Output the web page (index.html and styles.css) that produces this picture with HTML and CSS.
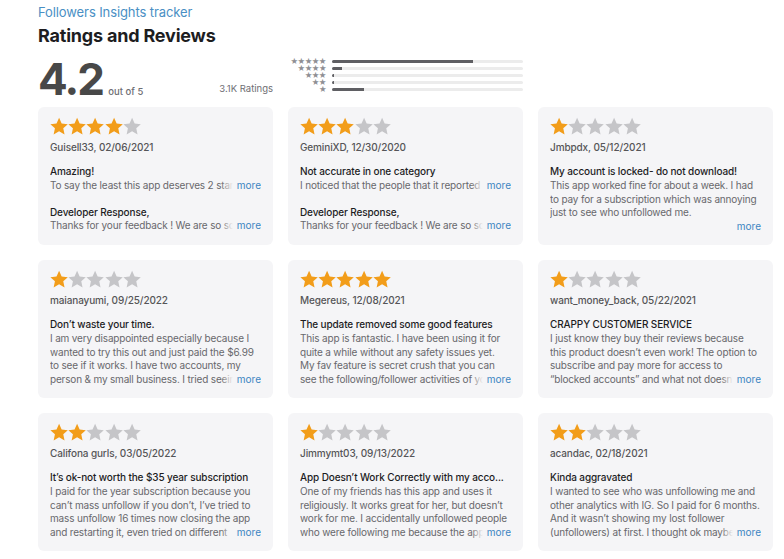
FILE: index.html
```html
<!DOCTYPE html>
<html lang="en">
<head>
<meta charset="utf-8">
<title>Ratings and Reviews</title>
<link rel="stylesheet" href="styles.css">
</head>
<body>
<svg class="defs" width="0" height="0" aria-hidden="true">
  <defs>
    <symbol id="star" viewBox="0 0 24 24">
      <path d="M12 0.6l3.4 7.4 8.1.9-6 5.5 1.7 8.1L12 18.4l-7.2 4.1 1.7-8.1-6-5.5 8.1-.9z"/>
    </symbol>
  </defs>
</svg>
<main class="page">
  <a class="app-link" href="#">Followers Insights tracker</a>
  <h1 class="title">Ratings and Reviews</h1>

  <section class="summary">
    <div class="score">
      <div class="score-main"><span class="score-num">4.2</span><span class="score-of">out of 5</span></div>
      <span class="score-count">3.1K Ratings</span>
    </div>
    <div class="hist">
      <div class="hist-row"><span class="hist-stars">★★★★★</span><span class="hist-track"><span class="hist-fill" style="width:74%"></span></span></div>
      <div class="hist-row"><span class="hist-stars">★★★★</span><span class="hist-track"><span class="hist-fill" style="width:5%"></span></span></div>
      <div class="hist-row"><span class="hist-stars">★★★</span><span class="hist-track"><span class="hist-fill" style="width:1.2%"></span></span></div>
      <div class="hist-row"><span class="hist-stars">★★</span><span class="hist-track"><span class="hist-fill" style="width:1.2%"></span></span></div>
      <div class="hist-row"><span class="hist-stars">★</span><span class="hist-track"><span class="hist-fill" style="width:17%"></span></span></div>
    </div>
  </section>

  <section class="reviews">
    <!-- Row 1 -->
    <article class="card">
      <div class="stars">
        <svg class="on"><use href="#star"/></svg><svg class="on"><use href="#star"/></svg><svg class="on"><use href="#star"/></svg><svg class="on"><use href="#star"/></svg><svg class="off"><use href="#star"/></svg>
      </div>
      <div class="meta">Guisell33, 02/06/2021</div>
      <h3 class="rtitle">Amazing!</h3>
      <div class="body l1">To say the least this app deserves 2 stars at most but I really<a class="more" href="#">more</a></div>
      <h3 class="rtitle dev">Developer Response,</h3>
      <div class="body l1">Thanks for your feedback ! We are so sorry for the trouble you faced<a class="more" href="#">more</a></div>
    </article>

    <article class="card">
      <div class="stars">
        <svg class="on"><use href="#star"/></svg><svg class="on"><use href="#star"/></svg><svg class="on"><use href="#star"/></svg><svg class="off"><use href="#star"/></svg><svg class="off"><use href="#star"/></svg>
      </div>
      <div class="meta">GeminiXD, 12/30/2020</div>
      <h3 class="rtitle">Not accurate in one category</h3>
      <div class="body l1">I noticed that the people that it reported as unfollowers were<a class="more" href="#">more</a></div>
      <h3 class="rtitle dev">Developer Response,</h3>
      <div class="body l1">Thanks for your feedback ! We are so sorry for the trouble you faced<a class="more" href="#">more</a></div>
    </article>

    <article class="card">
      <div class="stars">
        <svg class="on"><use href="#star"/></svg><svg class="off"><use href="#star"/></svg><svg class="off"><use href="#star"/></svg><svg class="off"><use href="#star"/></svg><svg class="off"><use href="#star"/></svg>
      </div>
      <div class="meta">Jmbpdx, 05/12/2021</div>
      <h3 class="rtitle">My account is locked- do not download!</h3>
      <div class="body">This app worked fine for about a week. I had to pay for a subscription which was annoying just to see who unfollowed me.</div>
      <div class="more-line"><a class="more-plain" href="#">more</a></div>
    </article>

    <!-- Row 2 -->
    <article class="card">
      <div class="stars">
        <svg class="on"><use href="#star"/></svg><svg class="off"><use href="#star"/></svg><svg class="off"><use href="#star"/></svg><svg class="off"><use href="#star"/></svg><svg class="off"><use href="#star"/></svg>
      </div>
      <div class="meta">maianayumi, 09/25/2022</div>
      <h3 class="rtitle">Don’t waste your time.</h3>
      <div class="body l4">I am very disappointed especially because I wanted to try this out and just paid the $6.99 to see if it works. I have two accounts, my person &amp; my small business. I tried seeing who unfollowed me<a class="more" href="#">more</a></div>
    </article>

    <article class="card">
      <div class="stars">
        <svg class="on"><use href="#star"/></svg><svg class="on"><use href="#star"/></svg><svg class="on"><use href="#star"/></svg><svg class="on"><use href="#star"/></svg><svg class="on"><use href="#star"/></svg>
      </div>
      <div class="meta">Megereus, 12/08/2021</div>
      <h3 class="rtitle">The update removed some good features</h3>
      <div class="body l4">This app is fantastic. I have been using it for quite a while without any safety issues yet. My fav feature is secret crush that you can see the following/follower activities of your crush and<a class="more" href="#">more</a></div>
    </article>

    <article class="card">
      <div class="stars">
        <svg class="on"><use href="#star"/></svg><svg class="off"><use href="#star"/></svg><svg class="off"><use href="#star"/></svg><svg class="off"><use href="#star"/></svg><svg class="off"><use href="#star"/></svg>
      </div>
      <div class="meta">want_money_back, 05/22/2021</div>
      <h3 class="rtitle">CRAPPY CUSTOMER SERVICE</h3>
      <div class="body l4">I just know they buy their reviews because this product doesn’t even work! The option to subscribe and pay more for access to “blocked accounts” and what not doesn’t work at all<a class="more" href="#">more</a></div>
    </article>

    <!-- Row 3 -->
    <article class="card">
      <div class="stars">
        <svg class="on"><use href="#star"/></svg><svg class="on"><use href="#star"/></svg><svg class="off"><use href="#star"/></svg><svg class="off"><use href="#star"/></svg><svg class="off"><use href="#star"/></svg>
      </div>
      <div class="meta">Califona gurls, 03/05/2022</div>
      <h3 class="rtitle">It’s ok-not worth the $35 year subscription</h3>
      <div class="body l4">I paid for the year subscription because you can’t mass unfollow if you don’t, I’ve tried to mass unfollow 16 times now closing the app and restarting it, even tried on different devices<a class="more" href="#">more</a></div>
    </article>

    <article class="card">
      <div class="stars">
        <svg class="on"><use href="#star"/></svg><svg class="off"><use href="#star"/></svg><svg class="off"><use href="#star"/></svg><svg class="off"><use href="#star"/></svg><svg class="off"><use href="#star"/></svg>
      </div>
      <div class="meta">Jimmymt03, 09/13/2022</div>
      <h3 class="rtitle">App Doesn’t Work Correctly with my acco...</h3>
      <div class="body l4">One of my friends has this app and uses it religiously. It works great for her, but doesn’t work for me. I accidentally unfollowed people who were following me because the app said they<a class="more" href="#">more</a></div>
    </article>

    <article class="card">
      <div class="stars">
        <svg class="on"><use href="#star"/></svg><svg class="on"><use href="#star"/></svg><svg class="off"><use href="#star"/></svg><svg class="off"><use href="#star"/></svg><svg class="off"><use href="#star"/></svg>
      </div>
      <div class="meta">acandac, 02/18/2021</div>
      <h3 class="rtitle">Kinda aggravated</h3>
      <div class="body l4">I wanted to see who was unfollowing me and other analytics with IG. So I paid for 6 months. And it wasn’t showing my lost follower (unfollowers) at first. I thought ok maybe it takes time<a class="more" href="#">more</a></div>
    </article>
  </section>
</main>
</body>
</html>
```

FILE: styles.css
```css
* { box-sizing: border-box; }

html, body {
  margin: 0;
  padding: 0;
  background: #ffffff;
}

body {
  font-family: Inter, "Liberation Sans", Arial, sans-serif;
  color: #1d1d1f;
  -webkit-font-smoothing: antialiased;
}

.defs { position: absolute; width: 0; height: 0; overflow: hidden; }

.page {
  padding: 4px 11px 0 38px;
}

.app-link {
  display: block;
  font-size: 13px;
  line-height: 16px;
  color: #4a8fc4;
  text-decoration: none;
  letter-spacing: -0.1px;
}

.title {
  margin: 5px 0 0;
  font-size: 18px;
  line-height: 22px;
  font-weight: 700;
  color: #1d1d1f;
  letter-spacing: -0.2px;
}

.summary {
  display: grid;
  grid-template-columns: 235px 235px;
  column-gap: 15px;
  margin-top: 2px;
  height: 52px;
}

.score {
  display: flex;
  align-items: flex-end;
  justify-content: space-between;
  padding-bottom: 0;
}

.score-main {
  display: flex;
  align-items: baseline;
}

.score-num {
  font-size: 44px;
  line-height: 44px;
  font-weight: 700;
  color: #484848;
  letter-spacing: -1.8px;
}

.score-of {
  margin-left: 5px;
  font-size: 9.5px;
  color: #6e6e73;
  font-weight: 500;
}

.score-count {
  font-size: 9.5px;
  color: #6e6e73;
  line-height: 14px;
  margin-bottom: 5px;
}

.hist {
  display: flex;
  flex-direction: column;
  padding-top: 9px;
}

.hist-row {
  display: flex;
  align-items: center;
  height: 7px;
}

.hist-stars {
  width: 38px;
  text-align: right;
  font-size: 8.5px;
  line-height: 7px;
  color: #8e8e93;
  letter-spacing: -0.5px;
  font-family: "DejaVu Sans", sans-serif;
}

.hist-track {
  flex: 1;
  margin-left: 6px;
  height: 2.5px;
  background: #ececec;
  border-radius: 2px;
  overflow: hidden;
}

.hist-fill {
  display: block;
  height: 100%;
  background: #5f5f63;
  min-width: 2px;
}

.reviews {
  display: grid;
  grid-template-columns: repeat(3, 235px);
  column-gap: 15px;
  row-gap: 15px;
  margin-top: 6px;
}

.card {
  background: #f5f5f7;
  border-radius: 6px;
  padding: 10px 12px 10px 12px;
  min-height: 138px;
  display: flex;
  flex-direction: column;
}

.stars {
  display: flex;
  height: 19px;
}

.stars svg {
  width: 18.2px;
  height: 19px;
}

.stars .on { fill: #f29d1a; }
.stars .off { fill: #c5c5c8; }

.meta {
  margin-top: 4px;
  font-size: 10px;
  line-height: 14px;
  font-weight: 500;
  color: #555558;
  letter-spacing: -0.12px;
}

.rtitle {
  margin: 11px 0 0;
  font-size: 10px;
  line-height: 13.8px;
  font-weight: 500;
  color: #1d1d1f;
  white-space: nowrap;
  overflow: hidden;
  text-overflow: ellipsis;
  letter-spacing: -0.12px;
}

.rtitle.dev { margin-top: 13px; }

.body {
  position: relative;
  font-size: 10px;
  line-height: 13.8px;
  color: #68686c;
  overflow: hidden;
  letter-spacing: -0.17px;
}

.body.l1 { height: 13.8px; }
.body.l4 { height: 55.2px; }

.more {
  position: absolute;
  right: 0;
  bottom: 0;
  padding-left: 16px;
  line-height: 13.8px;
  color: #3d86c2;
  text-decoration: none;
  letter-spacing: 0;
  background: linear-gradient(to right, rgba(245, 245, 247, 0) 0, #f5f5f7 12px);
}

.more-line {
  text-align: right;
  font-size: 10px;
  line-height: 13.8px;
}

.more-plain {
  color: #3d86c2;
  text-decoration: none;
}
```
